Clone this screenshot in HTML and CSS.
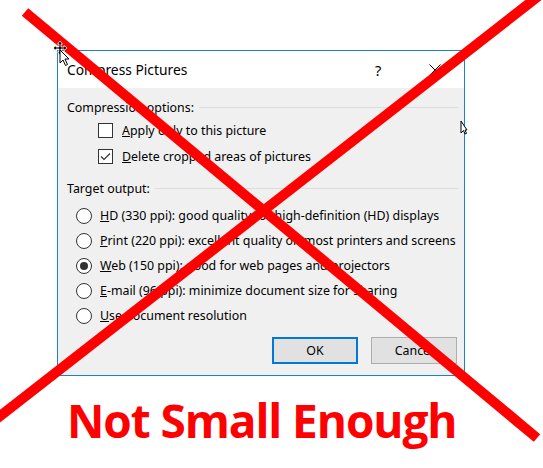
FILE: index.html
```html
<!DOCTYPE html>
<html>
<head>
<meta charset="utf-8">
<link rel="stylesheet" href="styles.css">
</head>
<body>
<div class="stage">
  <div class="dialog">
    <div class="titlebar">
      <span class="title">Compress Pictures</span>
      <span class="help">?</span>
      <span class="close"><svg width="12" height="12" viewBox="0 0 12 12"><path d="M0.5 0.5 L11.5 11.5 M11.5 0.5 L0.5 11.5" stroke="#000" stroke-width="1" fill="none"/></svg></span>
    </div>
    <div class="content">
      <div class="group-head first"><span>Compression options:</span><span class="rule"></span></div>
      <div class="check-row"><span class="box"></span><span><u>A</u>pply only to this picture</span></div>
      <div class="check-row"><span class="box"><svg width="13" height="13" viewBox="0 0 13 13"><path d="M2 6.5 L5 9.5 L11 3.5" stroke="#333" stroke-width="1.2" fill="none"/></svg></span><span><u>D</u>elete cropped areas of pictures</span></div>
      <div class="group-head second"><span>Target output:</span><span class="rule"></span></div>
      <div class="radios">
        <div class="radio-row"><span class="radio"></span><span><u>H</u>D (330 ppi): good quality for high-definition (HD) displays</span></div>
        <div class="radio-row"><span class="radio"></span><span><u>P</u>rint (220 ppi): excellent quality on most printers and screens</span></div>
        <div class="radio-row"><span class="radio on"></span><span><u>W</u>eb (150 ppi): good for web pages and projectors</span></div>
        <div class="radio-row"><span class="radio"></span><span><u>E</u>-mail (96 ppi): minimize document size for sharing</span></div>
        <div class="radio-row"><span class="radio"></span><span><u>U</u>se document resolution</span></div>
      </div>
      <div class="buttons">
        <div class="btn default">OK</div>
        <div class="btn">Cancel</div>
      </div>
    </div>
  </div>
  <div class="caption">Not Small Enough</div>
  <svg class="cross" width="543" height="468" viewBox="0 0 543 468">
    <line x1="25" y1="12" x2="537" y2="438" stroke="#ff0000" stroke-width="10"/>
    <line x1="545" y1="-9" x2="-5" y2="420" stroke="#ff0000" stroke-width="10"/>
  </svg>
  <svg class="cursor-move" width="16" height="16" viewBox="0 0 16 16">
    <path d="M8 1 L10.5 4 H9 V7 H12 V5.5 L15 8 L12 10.5 V9 H9 V12 H10.5 L8 15 L5.5 12 H7 V9 H4 V10.5 L1 8 L4 5.5 V7 H7 V4 H5.5 Z" fill="#000" stroke="#fff" stroke-width="0.8"/>
  </svg>
  <svg class="cursor-arrow" width="12" height="18" viewBox="0 0 12 18">
    <path d="M1 1 L1 14 L4 11 L6.5 16.5 L8.5 15.5 L6 10 L10 10 Z" fill="#fff" stroke="#000" stroke-width="1"/>
  </svg>
  <svg class="cursor-edge" width="8" height="16" viewBox="0 0 8 16">
    <path d="M1 1 L1 13 L3.5 10.5 L5 14 L6.5 13.4 L5 10 L7 10 Z" fill="#fff" stroke="#000" stroke-width="1"/>
  </svg>
</div>
</body>
</html>
```

FILE: styles.css
```css
* { box-sizing: border-box; }
html, body { margin: 0; padding: 0; background: #fff; }
body {
  width: 543px;
  height: 468px;
  overflow: hidden;
  font-family: "Noto Sans", "Open Sans", sans-serif;
}
.stage {
  position: relative;
  width: 543px;
  height: 468px;
  padding-top: 50px;
  padding-left: 57px;
}
.dialog {
  width: 408px;
  height: 326px;
  border: 1px solid #1c7fd6;
  background: #f0f0f0;
  display: flex;
  flex-direction: column;
}
.titlebar {
  height: 37px;
  background: #fff;
  display: flex;
  align-items: center;
  padding-left: 9px;
  font-size: 13.8px;
  color: #000;
}
.title { flex: 1; }
.help { width: 10px; margin-right: 44px; font-size: 14.5px; }
.close { width: 12px; height: 12px; margin-right: 23px; display: flex; }
.content {
  flex: 1;
  padding: 9px 6px 0 9px;
  font-size: 12.4px;
  color: #000;
  display: flex;
  flex-direction: column;
}
.group-head {
  height: 20px;
  display: flex;
  align-items: center;
  gap: 5px;
}
.group-head.second { margin-top: 9px; }
.rule { flex: 1; height: 1px; background: #dcdcdc; }
.check-row {
  height: 26px;
  display: flex;
  align-items: center;
  padding-left: 31px;
  gap: 9px;
}
.box {
  width: 15px;
  height: 15px;
  border: 1px solid #333;
  background: #fff;
  display: flex;
  align-items: center;
  justify-content: center;
}
.radios { margin-top: 5px; display: flex; flex-direction: column; }
.radio-row {
  height: 25px;
  display: flex;
  align-items: center;
  padding-left: 9px;
  gap: 8px;
  white-space: nowrap;
}
.radio {
  width: 16px;
  height: 16px;
  border: 1px solid #333;
  border-radius: 50%;
  background: #fff;
  display: flex;
  align-items: center;
  justify-content: center;
  flex: none;
}
.radio.on::after {
  content: "";
  width: 8px;
  height: 8px;
  border-radius: 50%;
  background: #333;
}
.buttons {
  margin-top: 9px;
  display: flex;
  justify-content: flex-end;
  gap: 13px;
  padding-right: 1px;
}
.btn {
  width: 86px;
  height: 27px;
  border: 1px solid #adadad;
  background: #e1e1e1;
  display: flex;
  align-items: center;
  justify-content: center;
  font-size: 12.4px;
}
.btn.default { border: 2px solid #0078d7; }
.caption {
  margin-top: 14px;
  margin-left: 10px;
  font-family: "Open Sans", "Noto Sans", sans-serif;
  font-weight: 700;
  font-size: 46px;
  line-height: 60px;
  color: #ff0000;
  letter-spacing: -1.1px;
  white-space: nowrap;
}
.cross { position: absolute; left: 0; top: 0; }
.cursor-move { position: absolute; left: 52px; top: 40px; }
.cursor-arrow { position: absolute; left: 59px; top: 49px; }
.cursor-edge { position: absolute; left: 460px; top: 120px; }
```
